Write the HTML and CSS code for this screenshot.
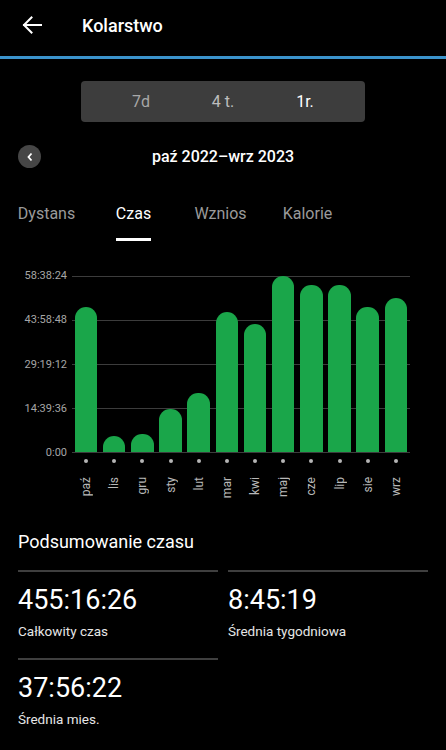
FILE: index.html
```html
<!DOCTYPE html>
<html lang="pl">
<head>
  <meta charset="UTF-8">
  <meta name="viewport" content="width=device-width, initial-scale=1.0">
  <title>Kolarstwo</title>
  <link rel="stylesheet" href="styles.css">
</head>
<body>

<header class="topbar">
  <button class="back" aria-label="Wstecz">
    <svg width="20" height="18" viewBox="0 0 20 18"><path d="M19 9H2M9.5 1.5L2 9l7.5 7.5" fill="none" stroke="#fff" stroke-width="2" stroke-linecap="square"/></svg>
  </button>
  <h1>Kolarstwo</h1>
</header>

<div class="range">
  <span>7d</span>
  <span class="mid">4 t.</span>
  <span class="on">1r.</span>
</div>

<div class="period">
  <button class="prev" aria-label="Poprzedni">
    <svg width="8" height="10" viewBox="0 0 8 10"><path d="M5.5 1.5L2.5 5l3 3.5" fill="none" stroke="#fff" stroke-width="1.8"/></svg>
  </button>
  <h2>paź 2022–wrz 2023</h2>
</div>

<nav class="tabs">
  <div><span>Dystans</span></div>
  <div><span class="on">Czas</span></div>
  <div><span>Wznios</span></div>
  <div><span>Kalorie</span></div>
</nav>

<section class="chart">
  <div class="yaxis">
    <span>58:38:24</span>
    <span>43:58:48</span>
    <span>29:19:12</span>
    <span>14:39:36</span>
    <span>0:00</span>
  </div>
  <div class="plot">
    <div class="col"><div class="bar" style="height:145px"></div></div>
    <div class="col"><div class="bar" style="height:16px"></div></div>
    <div class="col"><div class="bar" style="height:18px"></div></div>
    <div class="col"><div class="bar" style="height:43px"></div></div>
    <div class="col"><div class="bar" style="height:59px"></div></div>
    <div class="col"><div class="bar" style="height:140px"></div></div>
    <div class="col"><div class="bar" style="height:128px"></div></div>
    <div class="col"><div class="bar" style="height:176px"></div></div>
    <div class="col"><div class="bar" style="height:167px"></div></div>
    <div class="col"><div class="bar" style="height:167px"></div></div>
    <div class="col"><div class="bar" style="height:145px"></div></div>
    <div class="col"><div class="bar" style="height:154px"></div></div>
  </div>
  <div class="months">
    <div><i></i><span>paź</span></div>
    <div><i></i><span>lis</span></div>
    <div><i></i><span>gru</span></div>
    <div><i></i><span>sty</span></div>
    <div><i></i><span>lut</span></div>
    <div><i></i><span>mar</span></div>
    <div><i></i><span>kwi</span></div>
    <div><i></i><span>maj</span></div>
    <div><i></i><span>cze</span></div>
    <div><i></i><span>lip</span></div>
    <div><i></i><span>sie</span></div>
    <div><i></i><span>wrz</span></div>
  </div>
</section>

<section class="summary">
  <h3>Podsumowanie czasu</h3>
  <div class="stats">
    <div class="stat">
      <div class="val">455:16:26</div>
      <div class="lbl">Całkowity czas</div>
    </div>
    <div class="stat">
      <div class="val">8:45:19</div>
      <div class="lbl">Średnia tygodniowa</div>
    </div>
    <div class="stat">
      <div class="val">37:56:22</div>
      <div class="lbl">Średnia mies.</div>
    </div>
  </div>
</section>

</body>
</html>
```

FILE: styles.css
```css
body {
  margin: 0;
  background: #000;
  color: #fff;
  font-family: Roboto, "Noto Sans", sans-serif;
}
button {
  border: none;
  background: none;
  padding: 0;
  cursor: pointer;
}

.topbar {
  box-sizing: border-box;
  height: 59px;
  padding-bottom: 6px;
  display: flex;
  align-items: center;
  border-bottom: 3px solid #3b93cc;
}
.topbar .back {
  width: 20px;
  height: 18px;
  margin-left: 22px;
  display: flex;
}
.topbar h1 {
  margin: 0 0 0 40px;
  font-size: 18px;
  font-weight: 500;
}

.range {
  width: 246px;
  height: 41px;
  margin: 22px auto 0;
  padding: 0 19px;
  background: #3d3d3d;
  border-radius: 4px;
  display: grid;
  grid-template-columns: repeat(3, 1fr);
  align-items: center;
  text-align: center;
  font-size: 16px;
  color: #a8a8a8;
}
.range .mid { color: #bdbdbd; }
.range .on { color: #fff; }

.period {
  display: flex;
  align-items: center;
  margin: 23px 18px 0;
  height: 23px;
}
.period .prev {
  width: 23px;
  height: 23px;
  border-radius: 50%;
  background: #464646;
  display: flex;
  align-items: center;
  justify-content: center;
}
.period h2 {
  flex: 1;
  margin: 0 23px 0 0;
  text-align: center;
  font-size: 16px;
  font-weight: 500;
}

.tabs {
  display: grid;
  grid-template-columns: repeat(4, 87px);
  padding-left: 3px;
  margin-top: 36px;
  font-size: 16px;
  color: #9a9a9a;
  text-align: center;
}
.tabs span {
  display: inline-block;
  padding-bottom: 15px;
  border-bottom: 3px solid transparent;
}
.tabs .on {
  color: #fff;
  border-bottom-color: #fff;
}

.chart {
  display: grid;
  grid-template-columns: 72px 338px;
  margin-top: 35px;
}
.yaxis {
  grid-row: 1;
  height: 191px;
  margin: -7px 0;
  display: flex;
  flex-direction: column;
  justify-content: space-between;
  align-items: flex-end;
  padding-right: 5px;
  font-size: 11px;
  line-height: 14px;
  color: #a6a6a6;
}
.plot {
  grid-row: 1;
  grid-column: 2;
  height: 177px;
  display: grid;
  grid-template-columns: repeat(12, 1fr);
  align-items: end;
  background: repeating-linear-gradient(to bottom, #3c3c3c 0 1px, transparent 1px 44px);
}
.col {
  display: flex;
  justify-content: center;
  align-self: stretch;
  align-items: flex-end;
  padding-bottom: 1px;
}
.bar {
  width: 22.5px;
  background: #1aa64a;
  border-radius: 11px 11px 0 0;
}
.months {
  grid-column: 2;
  display: grid;
  grid-template-columns: repeat(12, 1fr);
  padding-top: 6px;
}
.months div {
  display: flex;
  flex-direction: column;
  align-items: center;
}
.months i {
  width: 4px;
  height: 4px;
  border-radius: 50%;
  background: #b5b5b5;
}
.months span {
  margin-top: 14px;
  writing-mode: vertical-rl;
  transform: rotate(180deg);
  font-size: 12px;
  color: #b8b8b8;
}

.summary {
  padding: 0 18px;
}
.summary h3 {
  margin: 33px 0 18px;
  font-size: 18px;
  font-weight: 400;
}
.stats {
  display: grid;
  grid-template-columns: 1fr 1fr;
  column-gap: 10px;
}
.stat {
  border-top: 2px solid #3f3f3f;
  height: 86px;
}
.stat .val {
  margin-top: 12px;
  font-size: 27px;
  line-height: 32px;
}
.stat .lbl {
  margin-top: 7px;
  font-size: 13.5px;
  color: #e6e6e6;
}
```
